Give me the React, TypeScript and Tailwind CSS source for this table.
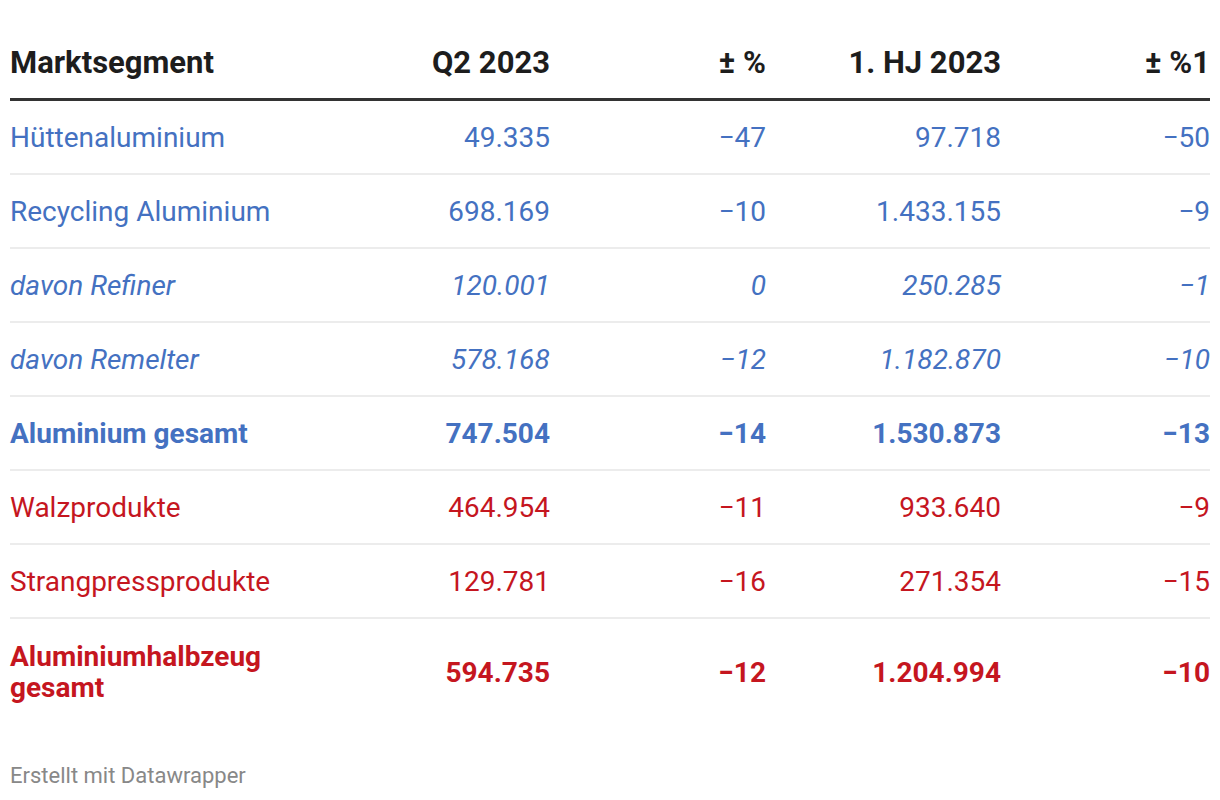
const BLUE = "text-[#4471c1]";
const RED = "text-[#c5161f]";

type Row = {
  label: string;
  values: [string, string, string, string];
  color: "blue" | "red";
  style?: "italic" | "bold";
};

const rows: Row[] = [
  { label: "Hüttenaluminium", values: ["49.335", "−47", "97.718", "−50"], color: "blue" },
  { label: "Recycling Aluminium", values: ["698.169", "−10", "1.433.155", "−9"], color: "blue" },
  { label: "davon Refiner", values: ["120.001", "0", "250.285", "−1"], color: "blue", style: "italic" },
  { label: "davon Remelter", values: ["578.168", "−12", "1.182.870", "−10"], color: "blue", style: "italic" },
  { label: "Aluminium gesamt", values: ["747.504", "−14", "1.530.873", "−13"], color: "blue", style: "bold" },
  { label: "Walzprodukte", values: ["464.954", "−11", "933.640", "−9"], color: "red" },
  { label: "Strangpressprodukte", values: ["129.781", "−16", "271.354", "−15"], color: "red" },
  { label: "Aluminiumhalbzeug gesamt", values: ["594.735", "−12", "1.204.994", "−10"], color: "red", style: "bold" },
];

const cols = "grid grid-cols-[300px_240px_216px_235px_209px]";

export default function App() {
  return (
    <div
      className="w-[1220px] h-[800px] bg-white px-[10px] pt-[29px]"
      style={{ fontFamily: "Roboto, 'Liberation Sans', sans-serif" }}
    >
      {/* Header */}
      <div className={`${cols} h-[72px] items-center border-b-[3px] border-[#333333] text-[31px] font-bold text-[#1d1d1d]`}>
        <div>Marktsegment</div>
        <div className="text-right">Q2 2023</div>
        <div className="text-right">± %</div>
        <div className="text-right">1. HJ 2023</div>
        <div className="text-right">± %1</div>
      </div>

      {/* Body */}
      {rows.map((r, i) => {
        const last = i === rows.length - 1;
        const color = r.color === "blue" ? BLUE : RED;
        const style =
          r.style === "italic" ? "italic" : r.style === "bold" ? "font-bold" : "";
        return (
          <div
            key={r.label}
            className={`${cols} items-center text-[28px] leading-[31px] ${color} ${style} ${
              last ? "pt-[22px] pb-[20px]" : "h-[74px] border-b-2 border-[#ececec]"
            }`}
          >
            <div className={last ? "pr-[30px]" : ""}>{r.label}</div>
            {r.values.map((v, j) => (
              <div key={j} className="text-right tabular-nums">
                {v}
              </div>
            ))}
          </div>
        );
      })}

      {/* Footer */}
      <div className="mt-[40px] text-[22px] leading-[26px] text-[#888888]">
        Erstellt mit Datawrapper
      </div>
    </div>
  );
}
